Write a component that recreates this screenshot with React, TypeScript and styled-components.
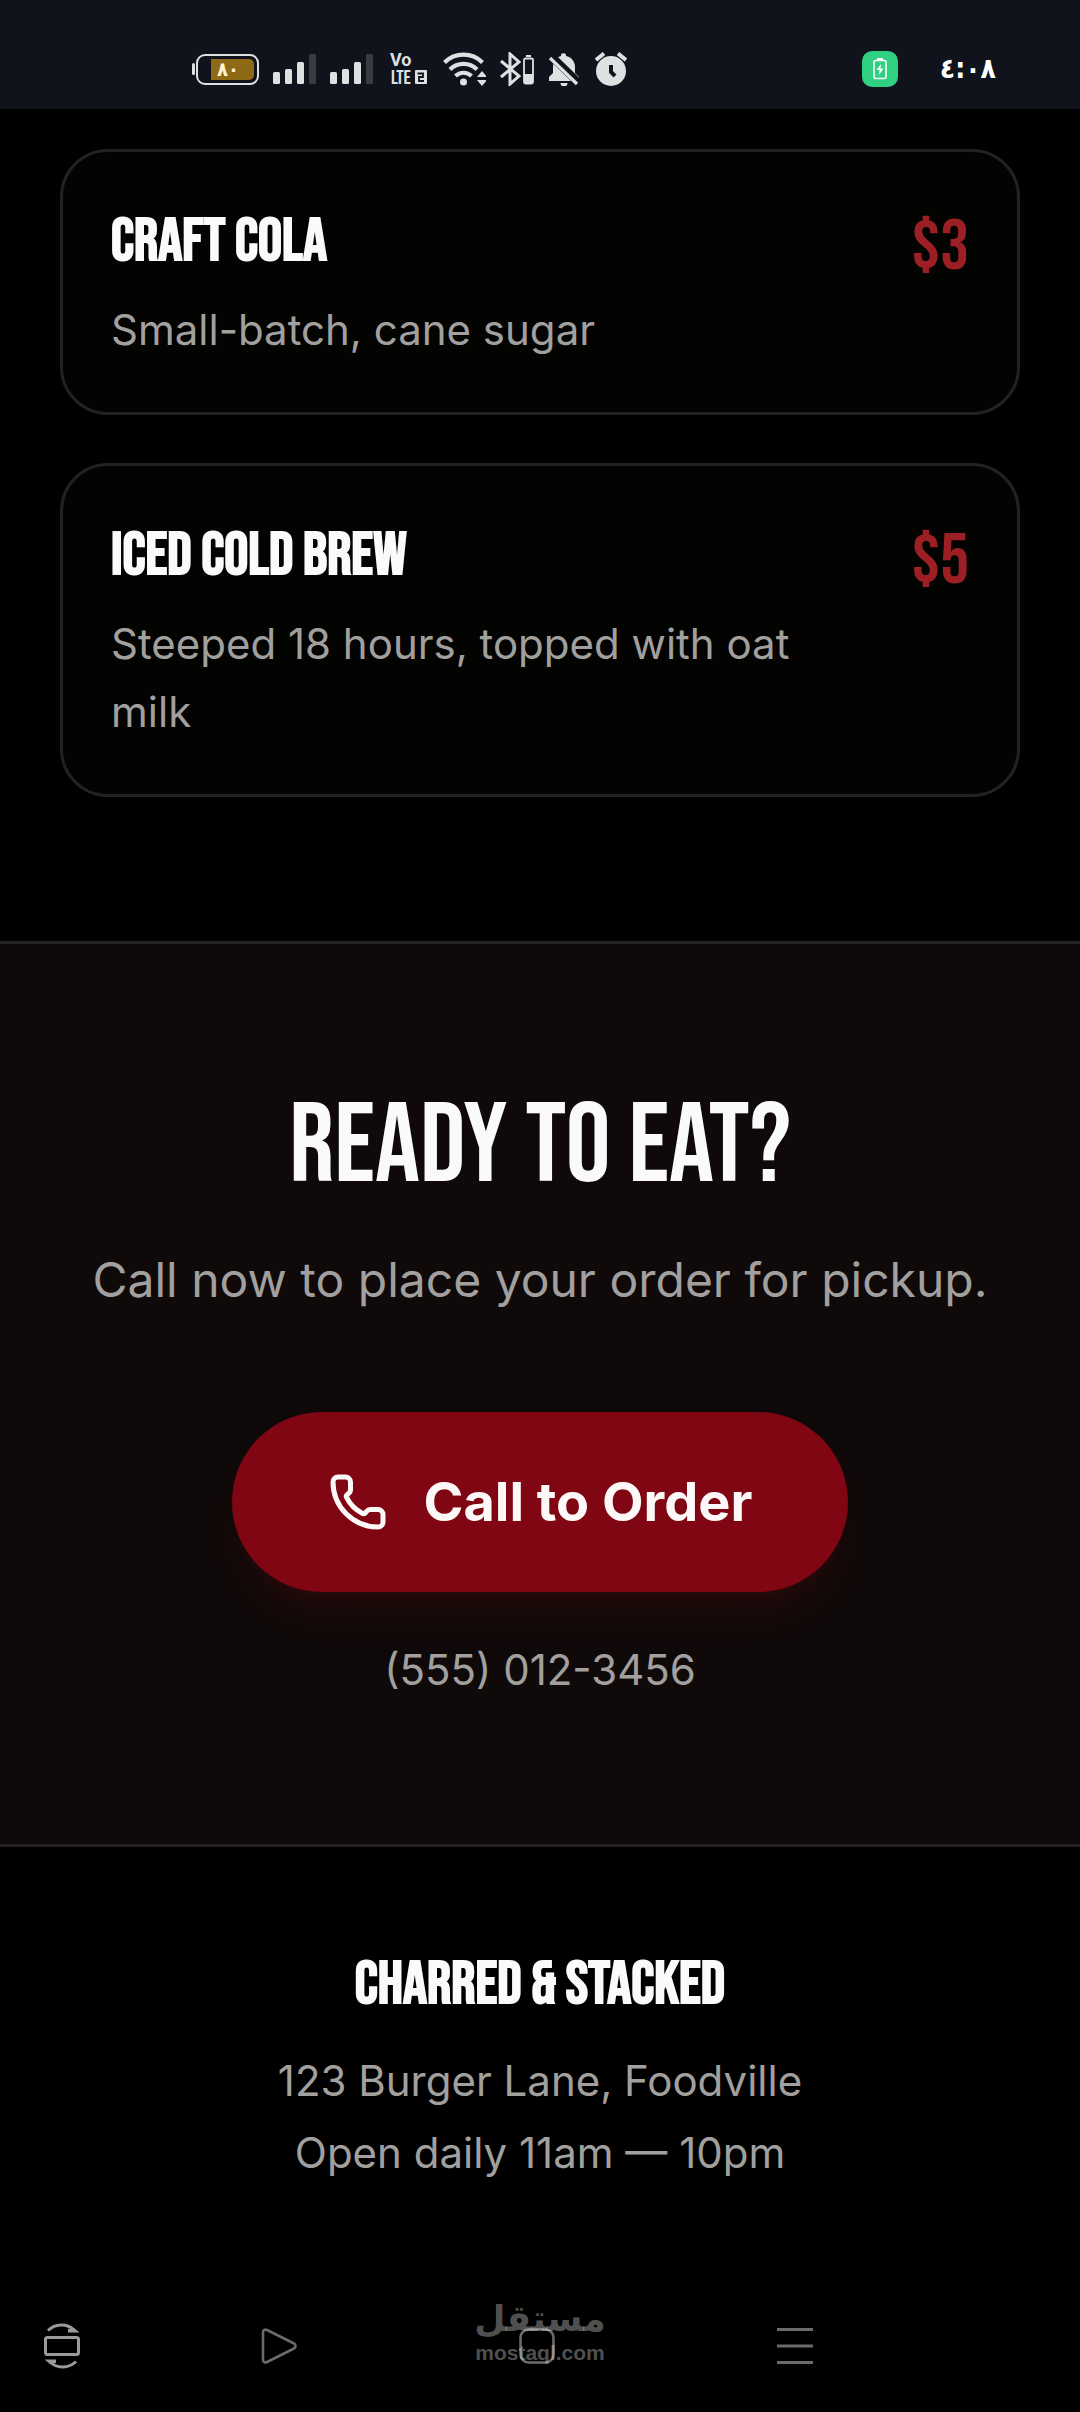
import React from "react";
import styled, { createGlobalStyle } from "styled-components";
import { Phone } from "lucide-react";

const GlobalStyle = createGlobalStyle`
  *, *::before, *::after { box-sizing: border-box; }
  body {
    margin: 0;
    background: #000;
    color: #fafafa;
    font-family: Inter, "Noto Sans", sans-serif;
  }
  h2, h3, p { margin: 0; }
`;

const display = `"Bebas Neue", "Liberation Sans Narrow", "Roboto Condensed", "Liberation Sans", sans-serif`;

const Screen = styled.div`
  min-height: 100vh;
  display: flex;
  flex-direction: column;
`;

const StatusBar = styled.header`
  display: flex;
  align-items: center;
  gap: 14px;
  height: 109px;
  padding: 29px 84px 0 192px;
  background: #10131b;
  color: #dfe0e2;
  svg { display: block; flex: none; }
`;

const Battery = styled.div`
  display: flex;
  align-items: center;
  width: 67px;
`;

const BatteryNub = styled.span`
  width: 3px;
  height: 12px;
  margin-right: 1px;
  border-radius: 2px;
  background: #dfe0e2;
`;

const BatteryShell = styled.span`
  flex: 1;
  display: flex;
  justify-content: flex-end;
  height: 31px;
  padding: 3px;
  border: 2px solid #dfe0e2;
  border-radius: 9px;
`;

const BatteryCharge = styled.span`
  display: flex;
  align-items: center;
  justify-content: flex-start;
  padding-left: 6px;
  width: 43px;
  border-radius: 0 5px 5px 0;
  background: #8e6a16;
  color: #fff3d0;
  font: bold 20px/21px "DejaVu Sans Condensed", "DejaVu Sans", sans-serif;
`;

const ChargeBadge = styled.span`
  display: grid;
  place-items: center;
  width: 36px;
  height: 36px;
  margin-left: auto;
  border-radius: 10px;
  background: #2fd181;
`;

const Clock = styled.time`
  display: flex;
  justify-content: flex-end;
  min-width: 54px;
  margin-left: 28px;
  color: #fff;
  font: bold 28px/36px "DejaVu Sans Condensed", "DejaVu Sans", sans-serif;
`;

const Menu = styled.section`
  display: flex;
  flex-direction: column;
  gap: 48px;
  padding: 40px 60px 144px;
`;

const Card = styled.article`
  display: flex;
  justify-content: space-between;
  align-items: flex-start;
  gap: 48px;
  padding: 48px;
  border: 3px solid #222;
  border-radius: 48px;
  background: #030301;
`;

const CardText = styled.div`
  flex: 1;
  max-width: 700px;
`;

const Title = styled.h3`
  font: bold 60px/84px ${display};
`;

const Body = styled.p<{ $line?: number }>`
  color: #a1a09f;
  font-size: 42px;
  line-height: ${(p) => p.$line ?? 60}px;
`;

const CardBody = styled(Body)`
  margin-top: 12px;
`;

const Price = styled.span`
  color: #9b1f24;
  font: 72px/96px ${display};
`;

const CallToAction = styled.section`
  display: flex;
  flex-direction: column;
  align-items: center;
  padding: 144px 60px;
  border: solid #252222;
  border-width: 3px 0;
  background: #0f0909;
  text-align: center;
`;

const Heading = styled.h2`
  font: 112px/120px ${display};
`;

const Lead = styled.p`
  margin-top: 36px;
  color: #a1a09f;
  font-size: 48px;
  line-height: 72px;
`;

const CallButton = styled.a`
  display: inline-flex;
  align-items: center;
  gap: 36px;
  margin: 96px 0 48px;
  padding: 48px 96px;
  border-radius: 90px;
  background: #7f0612;
  box-shadow: 0 30px 45px -9px rgba(127, 20, 20, 0.18), 0 12px 18px -12px rgba(127, 20, 20, 0.18);
  color: #fdf8f8;
  font-size: 54px;
  font-weight: 700;
  line-height: 84px;
  text-decoration: none;
`;

const Footer = styled.footer`
  display: flex;
  flex-direction: column;
  align-items: center;
  gap: 12px;
  padding: 96px 60px;
  text-align: center;
`;

const FooterTitle = styled(Title)`
  margin-bottom: 12px;
`;

const NavBar = styled.nav`
  position: relative;
  display: grid;
  grid-template-columns: 150px 1fr 1fr 1fr 156px;
  align-items: center;
  height: 132px;
  margin-top: auto;
`;

const NavButton = styled.button<{ $edge?: boolean }>`
  display: flex;
  justify-content: center;
  padding: 24px ${(p) => (p.$edge ? 26 : 0)}px 24px 0;
  border: 0;
  background: none;
  color: ${(p) => (p.$edge ? "#9a9a9a" : "#6b6b6b")};
  svg { display: block; }
`;

const Watermark = styled.div`
  position: absolute;
  top: 16px;
  left: 50%;
  transform: translateX(-50%);
  display: flex;
  flex-direction: column;
  align-items: center;
  color: rgba(255, 255, 255, 0.32);
  pointer-events: none;
`;

const WatermarkName = styled.span`
  font: bold 36px/46px "DejaVu Sans", sans-serif;
`;

const WatermarkSite = styled.span`
  font: bold 21px/22px "Liberation Sans", sans-serif;
`;

const Signal = () => (
  <svg width="43" height="31" viewBox="0 0 43 31" fill="currentColor" aria-hidden="true">
    <rect x="0" y="18" width="7" height="12" rx="1.5" />
    <rect x="12" y="15" width="7" height="15" rx="1.5" />
    <rect x="24" y="8" width="7" height="22" rx="1.5" />
    <rect x="36" y="0" width="7" height="30" rx="1.5" fill="#3a3c44" />
  </svg>
);

const VoLte = () => (
  <svg width="42" height="44" viewBox="0 -6 42 44" fill="currentColor" role="img" aria-label="VoLTE 2">
    <text x="3" y="13" fontSize="18" fontWeight="700" fontFamily="Roboto, sans-serif">Vo</text>
    <text x="4" y="31" fontSize="20" fontFamily="Bebas Neue, Liberation Sans Narrow, sans-serif">LTE</text>
    <rect x="28" y="17" width="12" height="14" rx="1" />
    <path d="M30.500 20.500h5.500v3.500H32v4h5" fill="none" stroke="#10131b" strokeWidth="1.800" />
  </svg>
);

const Wifi = () => (
  <svg width="43" height="34" viewBox="0 0 43 34" aria-hidden="true">
    <g fill="none" stroke="currentColor" strokeWidth="4.200">
      <path d="M1.500 10.500A27 27 0 0 1 39.500 10.500" />
      <path d="M7 17.500A19 19 0 0 1 34 17.500" />
      <path d="M12.500 24A11.500 11.500 0 0 1 28.500 24" />
    </g>
    <circle cx="20.500" cy="30" r="3.500" fill="currentColor" />
    <path d="M34 25l5-6 5 6zM34 28l5 6 5-6z" fill="currentColor" />
  </svg>
);

const Bluetooth = () => (
  <svg width="34" height="34" viewBox="0 0 34 34" aria-hidden="true">
    <path d="M1 9l18 15-9 8V2l9 8L1 25" fill="none" stroke="currentColor" strokeWidth="3" />
    <rect x="24" y="6.500" width="9" height="25" rx="1.500" fill="none" stroke="currentColor" strokeWidth="1.800" />
    <path d="M24 22h9v9h-9zM26 3h5v2h-5z" fill="currentColor" />
  </svg>
);

const BellOff = () => (
  <svg width="32" height="34" viewBox="0 0 32 34" aria-hidden="true">
    <path d="M1 29v-4l4-4V15C5 9 9 5 13 4V2.500a3 3 0 0 1 5 0V4c5 1 9 5 9 11v6l4 4v4zM12.500 31h7a3.500 3.500 0 0 1-7 0z" fill="currentColor" />
    <path d="M2 3l29 28" stroke="#10131b" strokeWidth="8" />
    <path d="M2 6l27 26" stroke="currentColor" strokeWidth="3.200" />
  </svg>
);

const Alarm = () => (
  <svg width="34" height="34" viewBox="0 0 34 34" aria-hidden="true">
    <circle cx="17" cy="19" r="15" fill="currentColor" />
    <path d="M2 8l8-6.500M32 8l-8-6.500" stroke="currentColor" strokeWidth="4" />
    <path d="M17 13v7l4 4" fill="none" stroke="#10131b" strokeWidth="4" />
  </svg>
);

const ChargingCell = () => (
  <svg width="16" height="22" viewBox="0 0 16 22" aria-hidden="true">
    <rect x="2" y="2.500" width="12" height="18" rx="1.500" fill="none" stroke="#fff" strokeWidth="1.600" />
    <path d="M5 0h6v2.500H5zM9 6l-4.500 6h3L7 17l4.500-6.500h-3z" fill="#fff" />
  </svg>
);

const RotateIcon = () => (
  <svg width="36" height="46" viewBox="0 0 36 46" fill="none" stroke="currentColor" aria-hidden="true">
    <rect x="1.500" y="14.500" width="33" height="17" rx="2" strokeWidth="3" />
    <path d="M4 7.500C11 .500 23 0 30 7M32 38.500C25 45.500 13 46 6 39" strokeWidth="3" />
    <path d="M35.500 9.500H24V6l6-1zM.500 36.500H12V40l-6 1z" fill="currentColor" stroke="none" />
  </svg>
);

const BackIcon = () => (
  <svg width="36" height="36" viewBox="0 0 36 36" fill="none" stroke="currentColor" strokeWidth="2.600" aria-hidden="true">
    <path d="M2 4.500v27c0 2.500 2 3.500 4 2.500l27-13.500c2-1 2-4 0-5L6 2c-2-1-4 0-4 2.500z" />
  </svg>
);

const HomeIcon = () => (
  <svg width="36" height="36" viewBox="0 0 36 36" fill="none" stroke="currentColor" strokeWidth="2.600" aria-hidden="true">
    <rect x="1.500" y="1.500" width="33" height="33" rx="8" />
  </svg>
);

const RecentsIcon = () => (
  <svg width="36" height="36" viewBox="0 0 36 36" stroke="currentColor" strokeWidth="3" aria-hidden="true">
    <path d="M0 1.500h36M0 18h36M0 34.500h36" />
  </svg>
);

const drinks = [
  { name: "CRAFT COLA", note: "Small-batch, cane sugar", price: "$3" },
  { name: "ICED COLD BREW", note: "Steeped 18 hours, topped with oat milk", price: "$5" },
];

export default function App() {
  return (
    <Screen>
      <GlobalStyle />
      <StatusBar>
        <Battery>
          <BatteryNub />
          <BatteryShell>
            <BatteryCharge>٨٠</BatteryCharge>
          </BatteryShell>
        </Battery>
        <Signal />
        <Signal />
        <VoLte />
        <Wifi />
        <Bluetooth />
        <BellOff />
        <Alarm />
        <ChargeBadge>
          <ChargingCell />
        </ChargeBadge>
        <Clock dateTime="04:08">٤:٠٨</Clock>
      </StatusBar>

      <main>
        <Menu>
          {drinks.map((drink) => (
            <Card key={drink.name}>
              <CardText>
                <Title>{drink.name}</Title>
                <CardBody $line={68}>{drink.note}</CardBody>
              </CardText>
              <Price>{drink.price}</Price>
            </Card>
          ))}
        </Menu>

        <CallToAction>
          <Heading>READY TO EAT?</Heading>
          <Lead>Call now to place your order for pickup.</Lead>
          <CallButton href="tel:5550123456">
            <Phone size={60} strokeWidth={2} aria-hidden="true" />
            Call to Order
          </CallButton>
          <Body>(555) 012-3456</Body>
        </CallToAction>
      </main>

      <Footer>
        <FooterTitle>CHARRED &amp; STACKED</FooterTitle>
        <Body>123 Burger Lane, Foodville</Body>
        <Body>Open daily 11am — 10pm</Body>
      </Footer>

      <NavBar aria-label="System">
        <Watermark>
          <WatermarkName lang="ar">مستقل</WatermarkName>
          <WatermarkSite>mostaql.com</WatermarkSite>
        </Watermark>
        <NavButton $edge type="button" aria-label="Rotate">
          <RotateIcon />
        </NavButton>
        <NavButton type="button" aria-label="Back">
          <BackIcon />
        </NavButton>
        <NavButton type="button" aria-label="Home">
          <HomeIcon />
        </NavButton>
        <NavButton type="button" aria-label="Recent apps">
          <RecentsIcon />
        </NavButton>
      </NavBar>
    </Screen>
  );
}
